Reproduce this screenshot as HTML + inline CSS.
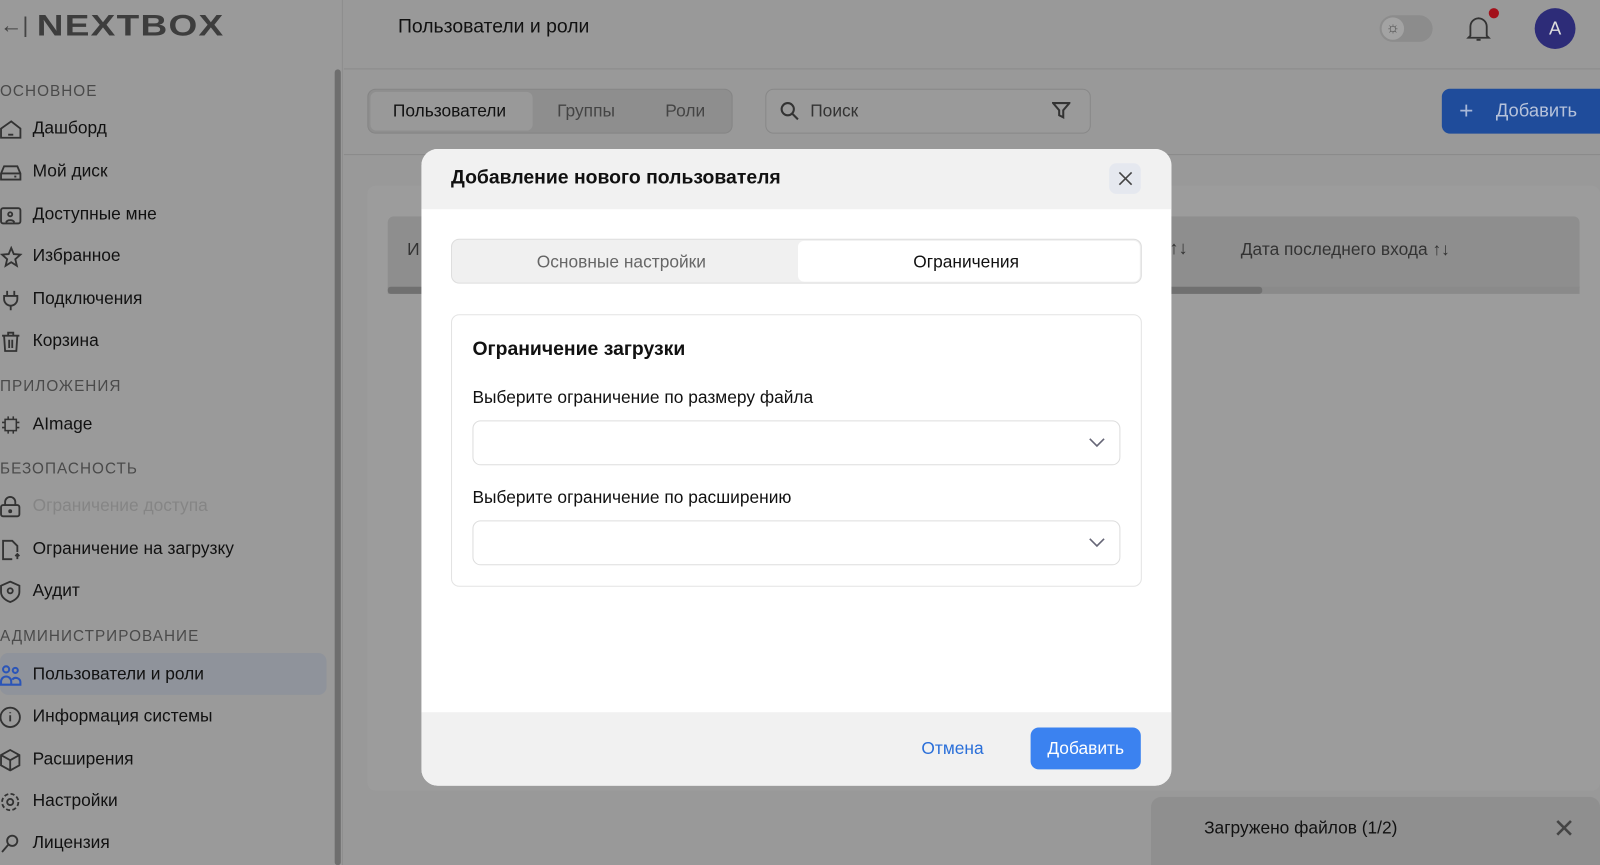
<!DOCTYPE html>
<html><head><meta charset="utf-8"><style>
*{box-sizing:border-box;margin:0;padding:0}
body{width:1600px;height:848px;overflow:hidden;background:#999;font-family:"Liberation Sans","DejaVu Sans",sans-serif;position:relative;color:#111}
#w{position:absolute;left:0;top:0;width:1568px;height:831px;transform:scale(1.0204);transform-origin:0 0}
.abs{position:absolute}
.side{left:0;top:0;width:336px;height:848px;border-right:1px solid #8c8c8c;background:#9a9a9a}
.sec{position:absolute;left:0;font-size:15px;letter-spacing:1px;color:#4a4a4a}
.item{position:absolute;left:0;font-size:17px;color:#111;height:24px;line-height:24px}
.item svg{position:absolute;left:0;top:2px}
.item span{position:absolute;left:32px;white-space:nowrap}
</style></head><body><div id="w">
<div class="abs side">
  <div class="abs" style="left:0;top:12px;font-size:22px;color:#444">&#8592;|</div>
  <div class="abs" style="left:36px;top:10px;font-size:29px;font-weight:bold;color:#3d3d3d;letter-spacing:1px;transform:scaleX(1.25);transform-origin:0 0">NEXTBOX</div>
  <div class="abs" style="left:328px;top:68px;width:6px;height:780px;background:#6e6e6e;border-radius:3px"></div>
  <div class="sec" style="top:81px">ОСНОВНОЕ</div>
  <div class="item" style="top:114px"><svg width="22" height="22" viewBox="0 0 22 22" fill="none" stroke="#333" stroke-width="1.8"><path d="M1 10 L11 3 L20 10 V19 H1 Z"/><path d="M8 16h5"/></svg><span>Дашборд</span></div>
  <div class="item" style="top:156px"><svg width="22" height="22" viewBox="0 0 22 22" fill="none" stroke="#333" stroke-width="1.8"><path d="M1 12 L4 5 H17 L20 12 V18 H1 Z M1 12 H20"/><path d="M14 15h2"/></svg><span>Мой диск</span></div>
  <div class="item" style="top:198px"><svg width="22" height="22" viewBox="0 0 22 22" fill="none" stroke="#333" stroke-width="1.8"><rect x="1" y="4" width="19" height="15" rx="2"/><circle cx="10" cy="10" r="2"/><path d="M6 18c1-3 7-3 8 0"/></svg><span>Доступные мне</span></div>
  <div class="item" style="top:239px"><svg width="22" height="22" viewBox="0 0 22 22" fill="none" stroke="#333" stroke-width="1.8"><path d="M11 2 L13.5 8 L20 8.5 L15 13 L16.5 19.5 L11 16 L5.5 19.5 L7 13 L2 8.5 L8.5 8 Z"/></svg><span>Избранное</span></div>
  <div class="item" style="top:281px"><svg width="22" height="22" viewBox="0 0 22 22" fill="none" stroke="#333" stroke-width="1.8"><path d="M7 2v5M14 2v5M4 7h13v3a6 6 0 0 1-13 0z M10.5 16v5"/></svg><span>Подключения</span></div>
  <div class="item" style="top:322px"><svg width="22" height="22" viewBox="0 0 22 22" fill="none" stroke="#333" stroke-width="1.8"><path d="M2 5h17M8 5V2h5v3M4 5l1 15h11l1-15M9 9v8M12 9v8"/></svg><span>Корзина</span></div>
  <div class="sec" style="top:370px">ПРИЛОЖЕНИЯ</div>
  <div class="item" style="top:404px"><svg width="22" height="22" viewBox="0 0 22 22" fill="none" stroke="#333" stroke-width="1.5"><rect x="5" y="5" width="11" height="11"/><path d="M8 2v3M13 2v3M8 16v3M13 16v3M2 8h3M2 13h3M16 8h3M16 13h3"/></svg><span>AImage</span></div>
  <div class="sec" style="top:451px">БЕЗОПАСНОСТЬ</div>
  <div class="item" style="top:484px;color:#858585"><svg width="22" height="22" viewBox="0 0 22 22" fill="none" stroke="#333" stroke-width="1.8"><rect x="1" y="9" width="18" height="11" rx="2"/><path d="M5 9V6a5 5 0 0 1 10 0v3"/><circle cx="10" cy="15" r="1"/></svg><span>Ограничение доступа</span></div>
  <div class="item" style="top:526px"><svg width="22" height="22" viewBox="0 0 22 22" fill="none" stroke="#333" stroke-width="1.8"><path d="M12 20H3V2h9l5 5v6M17 20v-5M15 17l2-2 2 2"/></svg><span>Ограничение на загрузку</span></div>
  <div class="item" style="top:567px"><svg width="22" height="22" viewBox="0 0 22 22" fill="none" stroke="#333" stroke-width="1.8"><path d="M10 1 L19 5 V11 C19 16 15 19 10 21 C5 19 1 16 1 11 V5 Z"/><circle cx="10" cy="10" r="2.5"/></svg><span>Аудит</span></div>
  <div class="sec" style="top:615px">АДМИНИСТРИРОВАНИЕ</div>
  <div class="abs" style="left:0;top:640px;width:320px;height:41px;background:#8f939b;border-radius:8px"></div>
  <div class="item" style="top:649px"><svg width="22" height="22" viewBox="0 0 22 22" fill="none" stroke="#2b55b8" stroke-width="2"><circle cx="6" cy="5" r="3"/><circle cx="15" cy="6" r="2.5"/><path d="M1 20v-3a5 5 0 0 1 10 0v3zM11 20h9v-2a4.5 4.5 0 0 0-8-3"/></svg><span>Пользователи и роли</span></div>
  <div class="item" style="top:690px"><svg width="22" height="22" viewBox="0 0 22 22" fill="none" stroke="#333" stroke-width="1.8"><circle cx="10" cy="11" r="9.5"/><path d="M10 9v6M10 6v1"/></svg><span>Информация системы</span></div>
  <div class="item" style="top:732px"><svg width="22" height="22" viewBox="0 0 22 22" fill="none" stroke="#333" stroke-width="1.8"><path d="M10 1 L19 6 V16 L10 21 L1 16 V6 Z M1 6 L10 11 L19 6 M10 11 V21"/></svg><span>Расширения</span></div>
  <div class="item" style="top:773px"><svg width="22" height="22" viewBox="0 0 22 22" fill="none" stroke="#333" stroke-width="1.8"><circle cx="10" cy="11" r="3"/><circle cx="10" cy="11" r="8" stroke-dasharray="4 2.3"/></svg><span>Настройки</span></div>
  <div class="item" style="top:814px"><svg width="22" height="22" viewBox="0 0 22 22" fill="none" stroke="#333" stroke-width="1.8"><circle cx="12" cy="8" r="5"/><path d="M8 12 L2 19"/></svg><span>Лицензия</span></div>
</div>
<div class="abs" style="left:337px;top:67px;width:1263px;height:1px;background:#8a8a8a"></div>
<div class="abs" style="left:390px;top:16px;font-size:19px;color:#111">Пользователи и роли</div>
<div class="abs" style="left:1352px;top:15px;width:52px;height:26px;border-radius:13px;background:#8c8c8c"></div>
<div class="abs" style="left:1354px;top:17px;width:22px;height:22px;border-radius:11px;background:#a3a3a3;font-size:15px;line-height:22px;text-align:center;color:#444">☼</div>
<svg class="abs" style="left:1437px;top:14px" width="24" height="28" viewBox="0 0 24 28" fill="none" stroke="#333" stroke-width="1.8"><path d="M4 21V12a8 8 0 0 1 16 0v9l2 2H2z M10 25h4 M12 3v1"/></svg>
<div class="abs" style="left:1459px;top:8px;width:10px;height:10px;border-radius:5px;background:#a3101a"></div>
<div class="abs" style="left:1504px;top:8px;width:40px;height:40px;border-radius:20px;background:#2d2c78;color:#ddd;font-size:18px;line-height:40px;text-align:center">A</div>

<div class="abs" style="left:337px;top:151px;width:1263px;height:1px;background:#8a8a8a"></div>
<div class="abs" style="left:360px;top:87px;width:358px;height:44px;border-radius:8px;background:#8e8e8e;border:1px solid #858585"></div>
<div class="abs" style="left:363px;top:90px;width:159px;height:38px;border-radius:6px;background:#999"></div>
<div class="abs" style="left:385px;top:99px;font-size:17px;color:#111">Пользователи</div>
<div class="abs" style="left:546px;top:99px;font-size:17px;color:#444">Группы</div>
<div class="abs" style="left:652px;top:99px;font-size:17px;color:#444">Роли</div>
<div class="abs" style="left:750px;top:87px;width:319px;height:44px;border-radius:8px;border:1px solid #888;background:#9a9a9a"></div>
<svg class="abs" style="left:764px;top:99px" width="20" height="20" viewBox="0 0 20 20" fill="none" stroke="#333" stroke-width="2"><circle cx="8" cy="8" r="6"/><path d="M12.5 12.5 L18 18"/></svg>
<div class="abs" style="left:794px;top:99px;font-size:17px;color:#333">Поиск</div>
<svg class="abs" style="left:1031px;top:99px" width="18" height="18" viewBox="0 0 18 18" fill="none" stroke="#333" stroke-width="2"><path d="M1 2h16l-6 7v7l-4-2V9z"/></svg>
<div class="abs" style="left:1413px;top:87px;width:187px;height:44px;border-radius:8px 0 0 8px;background:#1f4c9b"></div>
<div class="abs" style="left:1430px;top:95px;font-size:24px;color:#a8b8d8">+</div>
<div class="abs" style="left:1466px;top:98px;font-size:18px;color:#b6c2da">Добавить</div>

<div class="abs" style="left:360px;top:182px;width:1208px;height:593px;border-radius:8px;background:#9c9c9c"></div>
<div class="abs" style="left:380px;top:212px;width:1168px;height:70px;border-radius:6px 6px 0 0;background:#8e8e8e"></div>
<div class="abs" style="left:380px;top:281px;width:1168px;height:7px;background:#8a8a8a"></div>
<div class="abs" style="left:380px;top:281px;width:857px;height:7px;background:#707070;border-radius:3px"></div>
<div class="abs" style="left:399px;top:235px;font-size:17px;color:#333">И</div>
<div class="abs" style="left:1146px;top:233px;font-size:18px;color:#333">↑↓</div>
<div class="abs" style="left:1216px;top:235px;font-size:17px;color:#333">Дата последнего входа ↑↓</div>

<div class="abs" style="left:1128px;top:781px;width:440px;height:67px;border-radius:10px 10px 0 0;background:#8f8f8f"></div>
<div class="abs" style="left:1180px;top:802px;font-size:17px;color:#111">Загружено файлов (1/2)</div>
<div class="abs" style="left:1522px;top:797px;font-size:26px;color:#444">✕</div>

<div class="abs" style="left:413px;top:146px;width:735px;height:624px;border-radius:16px;background:#fff;overflow:hidden">
  <div class="abs" style="left:0;top:0;width:735px;height:59px;background:#f1f1f1"></div>
  <div class="abs" style="left:29px;top:18px;font-size:19px;font-weight:bold;color:#111">Добавление нового пользователя</div>
  <div class="abs" style="left:674px;top:14px;width:31px;height:30px;border-radius:7px;background:#e5e8ef"></div>
  <svg class="abs" style="left:682px;top:21px" width="16" height="16" viewBox="0 0 16 16" stroke="#444" stroke-width="1.6"><path d="M2 2L14 14M14 2L2 14"/></svg>
  <div class="abs" style="left:29px;top:88px;width:677px;height:44px;border-radius:8px;background:#f0f0f0;border:1px solid #ddd"></div>
  <div class="abs" style="left:369px;top:90px;width:335px;height:40px;border-radius:6px;background:#fff"></div>
  <div class="abs" style="left:113px;top:101px;font-size:17px;color:#666">Основные настройки</div>
  <div class="abs" style="left:482px;top:101px;font-size:17px;color:#111">Ограничения</div>
  <div class="abs" style="left:29px;top:162px;width:677px;height:267px;border-radius:8px;border:1px solid #e3e3e3"></div>
  <div class="abs" style="left:50px;top:186px;font-size:19px;font-weight:bold;color:#111">Ограничение загрузки</div>
  <div class="abs" style="left:50px;top:234px;font-size:17px;color:#111">Выберите ограничение по размеру файла</div>
  <div class="abs" style="left:50px;top:266px;width:635px;height:44px;border-radius:8px;border:1px solid #ddd"></div>
  <svg class="abs" style="left:654px;top:281px" width="16" height="12" viewBox="0 0 16 12" fill="none" stroke="#667" stroke-width="1.6"><path d="M1 3l7 7 7-7"/></svg>
  <div class="abs" style="left:50px;top:332px;font-size:17px;color:#111">Выберите ограничение по расширению</div>
  <div class="abs" style="left:50px;top:364px;width:635px;height:44px;border-radius:8px;border:1px solid #ddd"></div>
  <svg class="abs" style="left:654px;top:379px" width="16" height="12" viewBox="0 0 16 12" fill="none" stroke="#667" stroke-width="1.6"><path d="M1 3l7 7 7-7"/></svg>
  <div class="abs" style="left:0;top:552px;width:735px;height:72px;background:#f1f1f1"></div>
  <div class="abs" style="left:490px;top:578px;font-size:17px;color:#2a6fd9">Отмена</div>
  <div class="abs" style="left:597px;top:567px;width:108px;height:41px;border-radius:8px;background:#3b82f0;color:#fff;font-size:17px;line-height:41px;text-align:center">Добавить</div>
</div>
</div></body></html>
